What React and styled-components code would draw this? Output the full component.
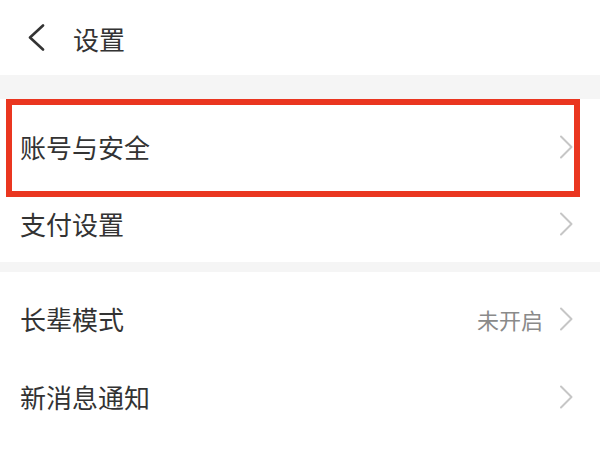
import React from 'react';
import styled, { createGlobalStyle } from 'styled-components';

const GlobalStyle = createGlobalStyle`
  html, body {
    margin: 0;
    padding: 0;
    background: #f5f5f5;
    font-family: "Noto Sans CJK SC", "Noto Sans", sans-serif;
  }
`;

const Page = styled.div`
  width: 600px;
  height: 450px;
  overflow: hidden;
  background: #f5f5f5;
  display: flex;
  flex-direction: column;
`;

const Header = styled.div`
  height: 75px;
  background: #fff;
  display: flex;
  align-items: center;
  padding-left: 27px;
  gap: 28px;
  flex-shrink: 0;
`;

const Title = styled.div`
  font-size: 26px;
  color: #333;
  line-height: 1;
  margin-top: 2px;
`;

const Group = styled.div`
  background: #fff;
  margin-top: ${p => p.$gap}px;
  padding-top: ${p => p.$padTop}px;
  flex-shrink: 0;
  flex-grow: ${p => (p.$fill ? 1 : 0)};
`;

const Row = styled.div`
  position: relative;
  height: ${p => p.$height}px;
  display: flex;
  align-items: center;
  padding: 0 27px 0 20px;

  ${p => p.$highlight && `
    &::after {
      content: '';
      position: absolute;
      top: -9px;
      bottom: -11px;
      left: 6px;
      right: 20px;
      border: 6px solid #ea3620;
      pointer-events: none;
    }
  `}
`;

const Label = styled.div`
  flex: 1;
  font-size: 26px;
  color: #333;
  line-height: 1;
`;

const Value = styled.div`
  font-size: 22px;
  color: #8a8a8a;
  line-height: 1;
  margin-right: 16px;
`;

const BackIcon = () => (
  <svg width="18" height="27" viewBox="0 0 18 27" fill="none">
    <polyline points="16,1.5 3,13.5 16,25.5" stroke="#333" strokeWidth="2.6" strokeLinecap="round" strokeLinejoin="round" />
  </svg>
);

const Chevron = () => (
  <svg width="14" height="24" viewBox="0 0 14 24" fill="none">
    <polyline points="2,1.5 12.5,12 2,22.5" stroke="#c6c6c6" strokeWidth="2" strokeLinecap="round" strokeLinejoin="round" />
  </svg>
);

const Item = ({ label, value, height, highlight }) => (
  <Row $height={height} $highlight={highlight}>
    <Label>{label}</Label>
    {value && <Value>{value}</Value>}
    <Chevron />
  </Row>
);

export default function App() {
  return (
    <>
      <GlobalStyle />
      <Page>
        <Header>
          <BackIcon />
          <Title>设置</Title>
        </Header>
        <Group $gap={24} $padTop={9}>
          <Item label="账号与安全" height={78} highlight />
          <Item label="支付设置" height={76} />
        </Group>
        <Group $gap={10} $padTop={8} $fill>
          <Item label="长辈模式" value="未开启" height={78} />
          <Item label="新消息通知" height={78} />
        </Group>
      </Page>
    </>
  );
}
